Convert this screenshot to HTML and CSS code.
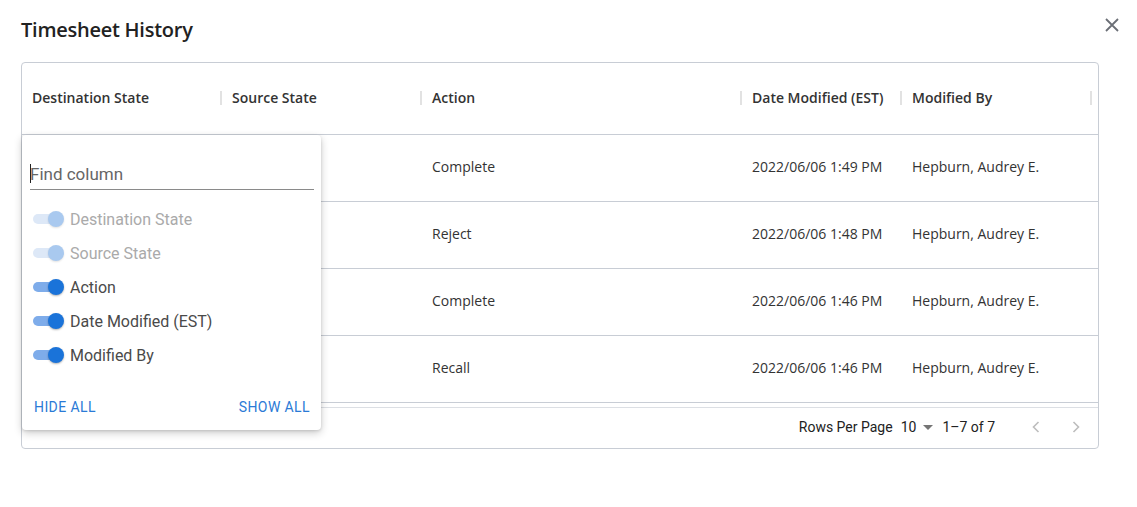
FILE: index.html
```html
<!DOCTYPE html>
<html>
<head>
<meta charset="utf-8">
<link rel="stylesheet" href="styles.css">
</head>
<body>
<div class="dialog">
  <div class="dialog-head">
    <h1 class="title">Timesheet History</h1>
    <button class="close" aria-label="Close">
      <svg width="14" height="14" viewBox="0 0 14 14"><path d="M1 1L13 13M13 1L1 13" stroke="#6b6f76" stroke-width="1.8" fill="none"/></svg>
    </button>
  </div>
  <div class="card">
    <div class="thead">
      <div class="th">Destination State</div>
      <div class="th">Source State</div>
      <div class="th">Action</div>
      <div class="th">Date Modified (EST)</div>
      <div class="th">Modified By</div>
    </div>
    <div class="tbody">
      <div class="tr"><div class="td"></div><div class="td"></div><div class="td">Complete</div><div class="td">2022/06/06 1:49 PM</div><div class="td">Hepburn, Audrey E.</div></div>
      <div class="tr"><div class="td"></div><div class="td"></div><div class="td">Reject</div><div class="td">2022/06/06 1:48 PM</div><div class="td">Hepburn, Audrey E.</div></div>
      <div class="tr"><div class="td"></div><div class="td"></div><div class="td">Complete</div><div class="td">2022/06/06 1:46 PM</div><div class="td">Hepburn, Audrey E.</div></div>
      <div class="tr"><div class="td"></div><div class="td"></div><div class="td">Recall</div><div class="td">2022/06/06 1:46 PM</div><div class="td">Hepburn, Audrey E.</div></div>
      <div class="tr"><div class="td"></div><div class="td"></div><div class="td"></div><div class="td"></div><div class="td"></div></div>
      <div class="tr"><div class="td"></div><div class="td"></div><div class="td"></div><div class="td"></div><div class="td"></div></div>
      <div class="tr"><div class="td"></div><div class="td"></div><div class="td"></div><div class="td"></div><div class="td"></div></div>
    </div>
    <div class="tfoot">
      <span class="rpp">Rows Per Page</span>
      <span class="select">10<span class="caret"></span></span>
      <span class="range">1–7 of 7</span>
      <span class="nav">
        <svg width="8" height="12" viewBox="0 0 8 12"><path d="M6.5 1L1.5 6L6.5 11" stroke="#bdbdbd" stroke-width="1.6" fill="none"/></svg>
      </span>
      <span class="nav last">
        <svg width="8" height="12" viewBox="0 0 8 12"><path d="M1.5 1L6.5 6L1.5 11" stroke="#bdbdbd" stroke-width="1.6" fill="none"/></svg>
      </span>
    </div>

    <div class="panel">
      <div class="find">
        <span class="cursor"></span><span class="placeholder">Find column</span>
      </div>
      <ul class="cols">
        <li class="col disabled"><span class="switch"><span class="track"></span><span class="knob"></span></span>Destination State</li>
        <li class="col disabled"><span class="switch"><span class="track"></span><span class="knob"></span></span>Source State</li>
        <li class="col"><span class="switch"><span class="track"></span><span class="knob"></span></span>Action</li>
        <li class="col"><span class="switch"><span class="track"></span><span class="knob"></span></span>Date Modified (EST)</li>
        <li class="col"><span class="switch"><span class="track"></span><span class="knob"></span></span>Modified By</li>
      </ul>
      <div class="actions">
        <button class="link">HIDE ALL</button>
        <button class="link">SHOW ALL</button>
      </div>
    </div>
  </div>
</div>
</body>
</html>
```
FILE: styles.css
```css
* { box-sizing: border-box; }
html, body { margin: 0; padding: 0; background: #fff; }
body { font-family: "Open Sans", "Liberation Sans", sans-serif; color: #333; }

.dialog { padding: 12px 18px 0 21px; width: 1137px; }
.dialog-head { display: flex; justify-content: space-between; align-items: flex-start; height: 50px; }
.title { margin: 4px 0 0 0; font-size: 20px; font-weight: 600; color: #222; letter-spacing: -0.25px; }
.close { background: none; border: 0; padding: 0; margin: 6px 0 0 0; width: 14px; height: 14px; display: block; }
.close svg { display: block; }

.card { position: relative; width: 1078px; border: 1px solid #c8cdd5; border-radius: 4px; }

.thead { display: grid; grid-template-columns: 200px 200px 320px 160px 190px; height: 72px; border-bottom: 1px solid #c8cdd5; }
.th { position: relative; display: flex; align-items: center; padding-left: 10px; padding-bottom: 2px; font-size: 14px; font-weight: 600; color: #333; }
.th::after { content: ""; position: absolute; right: 0; top: 28px; width: 2px; height: 14px; background: #e2e2e2; }

.tbody { height: 272px; overflow-y: scroll; }
.tbody::-webkit-scrollbar { width: 5px; }
.tbody::-webkit-scrollbar-track { background: transparent; }
.tbody::-webkit-scrollbar-thumb { background: #c5cad2; border-radius: 2px; }
.tr { display: grid; grid-template-columns: 200px 200px 320px 160px 191px; height: 67px; border-bottom: 1px solid #c8cdd5; }
.td { display: flex; align-items: center; padding-left: 10px; padding-bottom: 4px; font-size: 14px; color: #333; white-space: nowrap; }

.tfoot { height: 41px; border-top: 1px solid #dcdfe4; display: flex; align-items: center; justify-content: flex-end; padding-right: 18px; padding-bottom: 3px; font-family: Roboto, "Liberation Sans", sans-serif; font-size: 14px; color: #222; white-space: nowrap; }
.rpp { margin-right: 8px; }
.select { display: inline-flex; align-items: center; margin-right: 9px; }
.caret { width: 0; height: 0; border-left: 5px solid transparent; border-right: 5px solid transparent; border-top: 5px solid #757575; margin-left: 7px; margin-top: 2px; }
.range { margin-right: 37px; }
.nav { width: 40px; display: inline-flex; }
.nav.last { width: 8px; }
.nav svg { display: block; }

.panel { position: absolute; left: 0; top: 72px; width: 299px; height: 295px; background: #fff; border-radius: 4px; box-shadow: 0 3px 8px rgba(0,0,0,0.2), 0 1px 3px rgba(0,0,0,0.12); padding: 26px 7px 0 8px; font-family: Roboto, "Liberation Sans", sans-serif; }
.find { position: relative; height: 29px; border-bottom: 1px solid #8a8a8a; font-size: 17px; color: #666; display: flex; align-items: flex-start; }
.placeholder { line-height: 20px; margin-top: 3px; }
.cursor { position: absolute; left: 0; top: 3px; width: 1px; height: 19px; background: #222; }

.cols { list-style: none; margin: 12px 0 0 0; padding: 0; }
.col { display: flex; align-items: center; height: 34px; font-size: 16px; color: #4a4a4a; }
.col.disabled { color: #aaa; }
.switch { position: relative; width: 34px; height: 16px; margin: 0 3px 0 3px; }
.track { position: absolute; left: 0; top: 3px; width: 23px; height: 10px; border-radius: 5px; background: #7eacea; }
.knob { position: absolute; left: 15px; top: 0; width: 16px; height: 16px; border-radius: 50%; background: #1a73d9; box-shadow: 0 1px 2px rgba(0,0,0,0.3); }
.col.disabled .track { background: #dde8f7; }
.col.disabled .knob { background: #a9c9ef; box-shadow: 0 1px 2px rgba(0,0,0,0.12); }

.actions { display: flex; justify-content: space-between; margin-top: 27px; padding: 0 4px 0 4px; }
.link { background: none; border: 0; padding: 0; font-family: Roboto, "Liberation Sans", sans-serif; font-size: 14px; color: #2a7ad6; letter-spacing: 0.4px; }
```
